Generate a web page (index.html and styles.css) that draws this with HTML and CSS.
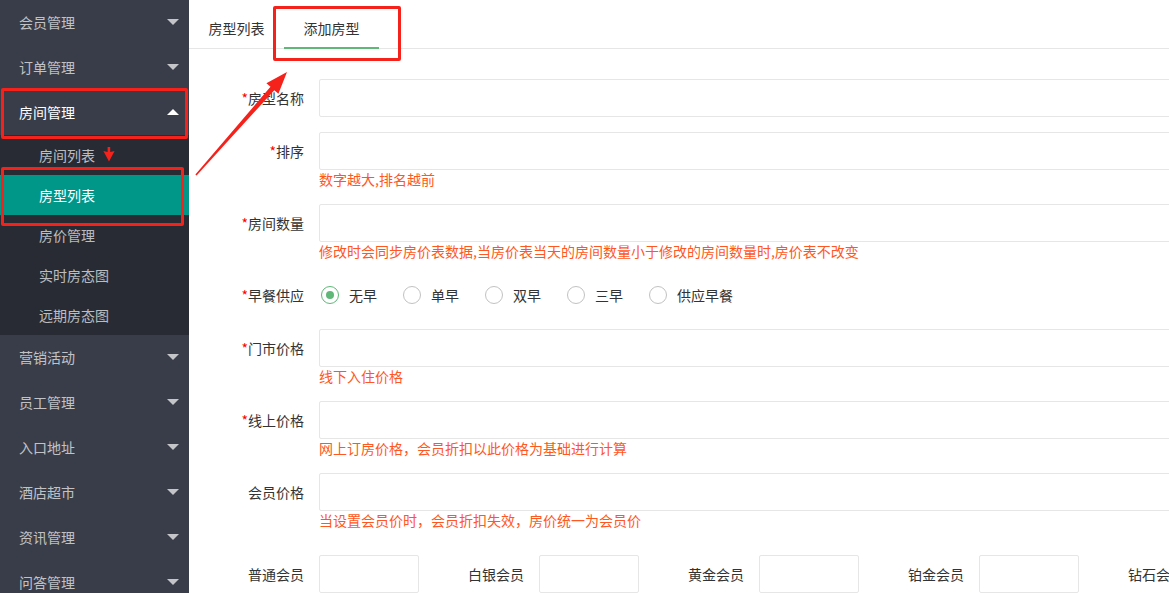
FILE: index.html
```html
<!DOCTYPE html>
<html>
<head>
    <meta charset="UTF-8">
    <title>添加房型</title>
    <link rel="stylesheet" href="styles.css">
</head>
<body>
    <div class="layout">
        <div class="side">
            <ul class="nav">
                <li class="nav-item"><a href="javascript:;">会员管理<span class="more"></span></a></li>
                <li class="nav-item"><a href="javascript:;">订单管理<span class="more"></span></a></li>
                <li class="nav-item open">
                    <a href="javascript:;">房间管理<span class="more up"></span></a>
                    <dl class="child">
                        <dd><a href="javascript:;">房间列表</a></dd>
                        <dd class="this"><a href="javascript:;">房型列表</a></dd>
                        <dd><a href="javascript:;">房价管理</a></dd>
                        <dd><a href="javascript:;">实时房态图</a></dd>
                        <dd><a href="javascript:;">远期房态图</a></dd>
                    </dl>
                </li>
                <li class="nav-item"><a href="javascript:;">营销活动<span class="more"></span></a></li>
                <li class="nav-item"><a href="javascript:;">员工管理<span class="more"></span></a></li>
                <li class="nav-item"><a href="javascript:;">入口地址<span class="more"></span></a></li>
                <li class="nav-item"><a href="javascript:;">酒店超市<span class="more"></span></a></li>
                <li class="nav-item"><a href="javascript:;">资讯管理<span class="more"></span></a></li>
                <li class="nav-item"><a href="javascript:;">问答管理<span class="more"></span></a></li>
            </ul>
        </div>
        <div class="main">
            <ul class="tab-title">
                <li>房型列表</li>
                <li class="this">添加房型</li>
            </ul>
            <form class="form">
                <div class="form-item">
                    <label class="form-label"><em>*</em>房型名称</label>
                    <div class="input-block"><input type="text" class="input"></div>
                </div>
                <div class="form-item">
                    <label class="form-label"><em>*</em>排序</label>
                    <div class="input-block">
                        <input type="text" class="input">
                        <p class="tip">数字越大,排名越前</p>
                    </div>
                </div>
                <div class="form-item">
                    <label class="form-label"><em>*</em>房间数量</label>
                    <div class="input-block">
                        <input type="text" class="input">
                        <p class="tip">修改时会同步房价表数据,当房价表当天的房间数量小于修改的房间数量时,房价表不改变</p>
                    </div>
                </div>
                <div class="form-item">
                    <label class="form-label"><em>*</em>早餐供应</label>
                    <div class="input-block radios">
                        <span class="radio checked"><i></i>无早</span>
                        <span class="radio"><i></i>单早</span>
                        <span class="radio"><i></i>双早</span>
                        <span class="radio"><i></i>三早</span>
                        <span class="radio"><i></i>供应早餐</span>
                    </div>
                </div>
                <div class="form-item">
                    <label class="form-label"><em>*</em>门市价格</label>
                    <div class="input-block">
                        <input type="text" class="input">
                        <p class="tip">线下入住价格</p>
                    </div>
                </div>
                <div class="form-item">
                    <label class="form-label"><em>*</em>线上价格</label>
                    <div class="input-block">
                        <input type="text" class="input">
                        <p class="tip">网上订房价格，会员折扣以此价格为基础进行计算</p>
                    </div>
                </div>
                <div class="form-item">
                    <label class="form-label">会员价格</label>
                    <div class="input-block">
                        <input type="text" class="input">
                        <p class="tip">当设置会员价时，会员折扣失效，房价统一为会员价</p>
                    </div>
                </div>
                <div class="form-item tiers">
                    <div class="inline"><label class="form-label">普通会员</label><input type="text" class="input small"></div>
                    <div class="inline"><label class="form-label">白银会员</label><input type="text" class="input small"></div>
                    <div class="inline"><label class="form-label">黄金会员</label><input type="text" class="input small"></div>
                    <div class="inline"><label class="form-label">铂金会员</label><input type="text" class="input small"></div>
                    <div class="inline"><label class="form-label">钻石会员</label><input type="text" class="input small"></div>
                </div>
            </form>
        </div>
    </div>

    <!-- 标注 -->
    <div class="mark mark-room"></div>
    <div class="mark mark-type"></div>
    <div class="mark mark-tab"></div>
    <svg class="mark-arrow" width="1169" height="593" viewBox="0 0 1169 593">
        <polygon points="195.4,174.5 270.5,86.8 266.4,83.2 287,72 278.4,93.8 274.3,90.2 196.6,175.5" fill="#f5221b"/>
        <polygon points="107.6,147 110.2,147 110.2,152 114.6,151 109,161.5 103.4,151 107.6,152" fill="#f5221b"/>
    </svg>
</body>
</html>
```

FILE: styles.css
```css
* {
    margin: 0;
    padding: 0;
    box-sizing: border-box;
}
body {
    overflow: hidden;
    height: 593px;
    font-family: "Noto Sans CJK SC", "Microsoft YaHei", sans-serif;
    font-size: 14px;
    color: #333;
}
ul, dl { list-style: none; }
a { text-decoration: none; }

.layout { display: flex; height: 593px; }

/* 左侧导航 */
.side { width: 189px; flex: none; background: #393D49; }
.nav-item > a {
    display: flex;
    align-items: center;
    justify-content: space-between;
    height: 45px;
    padding: 0 10px 1px 19px;
    color: rgba(255,255,255,.7);
}
.nav-item.open > a { color: #fff; }
.more {
    width: 0;
    height: 0;
    border: 6px solid transparent;
    border-top-color: rgba(255,255,255,.7);
    border-bottom-width: 0;
}
.more.up {
    border-top-width: 0;
    border-top-color: transparent;
    border-bottom: 6px solid #fff;
}
.child { background: #282B33; }
.child dd a {
    display: block;
    height: 40px;
    line-height: 40px;
    padding-left: 39px;
    color: rgba(255,255,255,.7);
}
.child dd.this a { background: #009688; color: #fff; }

/* 右侧内容 */
.main { flex: none; width: 1340px; background: #fff; }
.tab-title {
    display: flex;
    height: 49px;
    padding-top: 8px;
    border-bottom: 1px solid #e6e6e6;
}
.tab-title li {
    position: relative;
    width: 95px;
    height: 40px;
    line-height: 40px;
    text-align: center;
    color: #333;
}
.tab-title li.this:after {
    content: "";
    position: absolute;
    left: 0;
    right: 0;
    bottom: -1px;
    height: 2px;
    background: #5FB878;
}

.form { padding: 30px 0 0 20px; }
.form-item { display: flex; margin-bottom: 15px; }
.form-label {
    flex: none;
    width: 110px;
    padding: 9px 15px;
    line-height: 20px;
    text-align: right;
    color: #333;
}
.form-label em { font-style: normal; color: #f00; }
.input-block { flex: 1; }
.input {
    display: block;
    width: 100%;
    height: 38px;
    border: 1px solid #e6e6e6;
    border-radius: 2px;
    background: #fff;
    outline: none;
}
.tip { line-height: 19px; color: #FF5722; }

.radios { display: flex; align-items: center; height: 38px; padding-left: 2px; }
.radio { display: flex; align-items: center; margin-right: 26px; color: #333; }
.radio i {
    display: flex;
    align-items: center;
    justify-content: center;
    width: 18px;
    height: 18px;
    margin-right: 10px;
    border: 1px solid #c2c2c2;
    border-radius: 50%;
}
.radio.checked i { border-color: #5FB878; }
.radio.checked i:after {
    content: "";
    width: 8px;
    height: 8px;
    border-radius: 50%;
    background: #5FB878;
}

.tiers { padding-top: 10px; }
.inline { display: flex; flex: none; margin-right: 10px; }
.input.small { width: 100px; }

/* 标注 */
.mark {
    position: absolute;
    border: 3px solid #f5221b;
    border-radius: 2px;
    pointer-events: none;
}
.mark-room { left: 1px; top: 88px; width: 187px; height: 51px; }
.mark-type { left: 1px; top: 167px; width: 183px; height: 59px; }
.mark-tab { left: 273px; top: 6px; width: 128px; height: 55px; }
.mark-arrow { position: absolute; left: 0; top: 0; pointer-events: none; }
```
